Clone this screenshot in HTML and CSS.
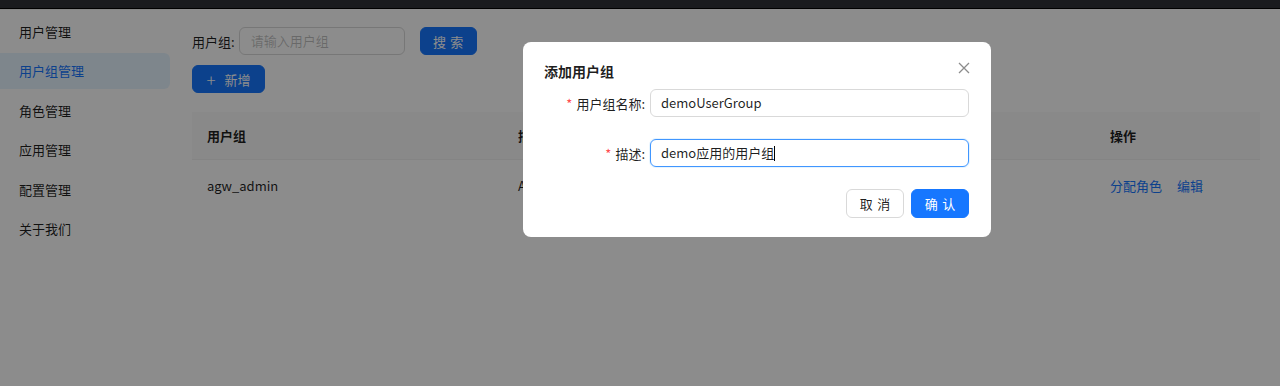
FILE: index.html
```html
<!doctype html>
<html lang="zh-CN">
<head>
  <meta charset="UTF-8">
  <title>用户组管理</title>
  <link rel="stylesheet" href="styles.css">
</head>
<body>
  <div class="topbar"></div>
  <div class="layout">
    <div class="sidebar">
      <div class="menu-item">用户管理</div>
      <div class="menu-item active">用户组管理</div>
      <div class="menu-item">角色管理</div>
      <div class="menu-item">应用管理</div>
      <div class="menu-item">配置管理</div>
      <div class="menu-item">关于我们</div>
    </div>
    <div class="main">
      <div class="search-bar">
        <span class="search-label">用户组:</span>
        <div class="input search-input placeholder">请输入用户组</div>
        <button class="btn primary two-char" type="button">搜索</button>
      </div>
      <button class="btn primary add" type="button"><span class="plus">+</span>新增</button>
      <table class="table">
        <thead>
          <tr>
            <th class="col-name">用户组</th>
            <th class="col-desc">描述</th>
            <th class="col-time">创建时间</th>
            <th>操作</th>
          </tr>
        </thead>
        <tbody>
          <tr>
            <td>agw_admin</td>
            <td>Admin用户组</td>
            <td>2023-05-12 10:20:31</td>
            <td><a class="link">分配角色</a><a class="link">编辑</a></td>
          </tr>
        </tbody>
      </table>
    </div>
  </div>

  <div class="mask">
    <div class="modal">
      <div class="modal-header">
        <span class="modal-title">添加用户组</span>
        <svg class="close" width="12" height="12" viewBox="0 0 12 12">
          <path d="M1 1L11 11M11 1L1 11" stroke="#8c8c8c" stroke-width="1.3" fill="none"/>
        </svg>
      </div>
      <div class="form-row">
        <label class="form-label"><span class="req">*</span>用户组名称:</label>
        <div class="input field">demoUserGroup</div>
      </div>
      <div class="form-row">
        <label class="form-label"><span class="req">*</span>描述:</label>
        <div class="input field focused">demo应用的用户组<span class="caret"></span></div>
      </div>
      <div class="modal-footer">
        <button class="btn default two-char" type="button">取消</button>
        <button class="btn primary two-char" type="button">确认</button>
      </div>
    </div>
  </div>
</body>
</html>
```

FILE: styles.css
```css
body {
  margin: 0;
  padding: 0;
  background-color: #ffffff;
  font-family: "Noto Sans CJK SC", "Noto Sans", sans-serif;
  font-size: 13px;
  color: rgba(0, 0, 0, 0.88);
}

.topbar {
  height: 8px;
  background-color: #303238;
  border-bottom: 1px solid #000000;
}

.layout {
  display: flex;
}

.sidebar {
  width: 170px;
  padding-top: 3.5px;
  border-top: 1px solid #f2f2f2;
}

.menu-item {
  height: 36px;
  line-height: 36px;
  padding-left: 19px;
  margin-bottom: 3.5px;
  border-radius: 0 6px 6px 0;
}

.menu-item.active {
  background-color: #e6f4ff;
  color: #1677ff;
}

.main {
  flex: 1;
  padding: 18px 20px 0 22px;
}

.search-bar {
  display: flex;
  align-items: center;
  margin-bottom: 10px;
}

.search-label {
  margin-right: 4px;
}

.input {
  height: 26px;
  line-height: 26px;
  border: 1px solid #d9d9d9;
  border-radius: 6px;
  padding: 0 11px;
  background: #ffffff;
  box-sizing: content-box;
}

.search-input {
  width: 142px;
  margin-right: 15px;
}

.placeholder {
  color: rgba(0, 0, 0, 0.25);
}

.btn {
  font-family: inherit;
  font-size: 13px;
  height: 28px;
  border-radius: 6px;
  padding: 0 14px;
  border: 1px solid #d9d9d9;
  background: #ffffff;
  color: rgba(0, 0, 0, 0.88);
  cursor: pointer;
}

.btn.primary {
  background: #1677ff;
  border-color: #1677ff;
  color: #ffffff;
}

.two-char {
  width: 57px;
  padding: 0;
  letter-spacing: 0.34em;
  text-indent: 0.34em;
}

.add {
  width: 73px;
  display: flex;
  align-items: center;
  justify-content: center;
  padding: 0;
}

.plus {
  font-size: 17px;
  font-weight: 300;
  margin-right: 9px;
  line-height: 1;
}

.table {
  width: 100%;
  margin-top: 19px;
  border-collapse: collapse;
}

.table th {
  background: #fafafa;
  text-align: left;
  font-weight: 600;
  height: 47px;
  padding: 0 15px;
  border-bottom: 1px solid #f0f0f0;
}

.table td {
  height: 50px;
  padding: 0 15px;
}

.col-name {
  width: 281px;
}

.col-desc {
  width: 280px;
}

.col-time {
  width: 252px;
}

.link {
  color: #1677ff;
  margin-right: 15px;
}

.mask {
  position: fixed;
  top: 0;
  left: 0;
  right: 0;
  bottom: 0;
  background: rgba(0, 0, 0, 0.45);
}

.modal {
  position: absolute;
  left: 523px;
  top: 42px;
  width: 468px;
  box-sizing: border-box;
  padding: 19px 22px 19px 21px;
  background: #ffffff;
  border-radius: 8px;
}

.modal-header {
  display: flex;
  justify-content: space-between;
  align-items: center;
  height: 20px;
  margin-bottom: 8px;
}

.modal-title {
  font-size: 14px;
  font-weight: 600;
}

.close {
  margin-right: -1px;
  margin-top: -7px;
}

.form-row {
  display: flex;
  align-items: center;
  margin-bottom: 22px;
}

.form-label {
  width: 101px;
  text-align: right;
  padding-right: 5px;
  white-space: nowrap;
}

.req {
  color: #ff4d4f;
  margin-right: 4px;
}

.field {
  flex: 1;
  padding-left: 10px;
}

.focused {
  border-color: #4096ff;
  box-shadow: 0 0 0 1px rgba(5, 145, 255, 0.1);
}

.caret {
  display: inline-block;
  width: 1px;
  height: 15px;
  background: #000000;
  vertical-align: -3px;
}

.modal-footer {
  display: flex;
  justify-content: flex-end;
  gap: 7px;
}

.modal-footer .btn {
  height: 29px;
  width: 58px;
}
```
